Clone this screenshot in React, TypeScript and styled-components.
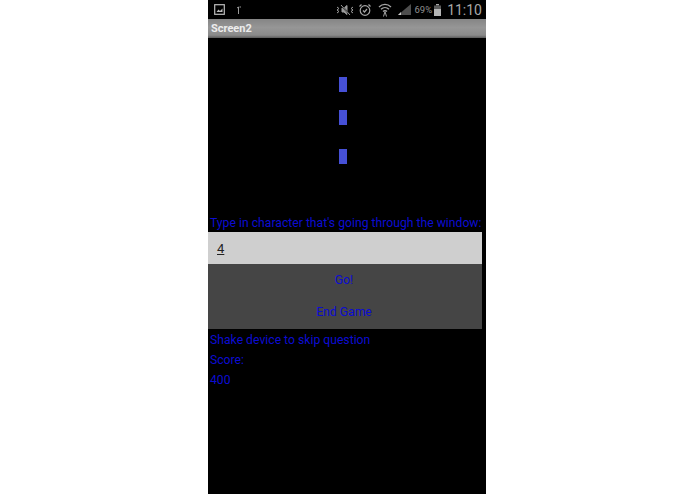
import React from "react";
import styled, { createGlobalStyle } from "styled-components";

const Global = createGlobalStyle`
  html, body { margin: 0; padding: 0; background: #fff; }
  body { width: 695px; height: 494px; overflow: hidden; font-family: Roboto, "Liberation Sans", sans-serif; }
`;
const Page = styled.div`
  width: 695px; height: 494px; display: flex; justify-content: flex-start; background: #fff;
  padding-left: 208px; box-sizing: border-box;
`;
const Phone = styled.div`
  width: 278px; height: 494px; background: #000; display: flex; flex-direction: column;
`;
const StatusBar = styled.div`
  height: 19px; display: flex; align-items: center; padding: 0 4px 0 6px; color: #9a9a9a; flex: none;
`;
const StatusLeft = styled.div`
  display: flex; align-items: center; gap: 11px; flex: 1;
`;
const StatusRight = styled.div`
  display: flex; align-items: center;
`;
const Percent = styled.span`
  font-size: 9.5px; color: #8f8f8f; margin-left: 2px; margin-right: 2px;
`;
const Clock = styled.span`
  font-size: 14px; color: #a8a8a8; margin-left: 6px;
`;
const TitleBar = styled.div`
  height: 19px; flex: none; display: flex; align-items: center; padding-left: 3px;
  background: linear-gradient(#858585, #969696 45%, #8a8a8a 85%, #5a5a5a);
  color: #ececec; font-size: 11px; font-weight: 700;
`;
const Canvas = styled.div`
  height: 174px; flex: none; display: flex; flex-direction: column; align-items: flex-start;
  padding: 39px 0 0 131px; box-sizing: border-box;
`;
const Bar = styled.div<{ $h: number; $mb: number }>`
  width: 8px; height: ${(p) => p.$h}px; margin-bottom: ${(p) => p.$mb}px; background: #4650d6; flex: none;
`;
const Label = styled.div`
  color: #0c0cd2; font-size: 12.2px; line-height: 20px; padding-left: 2px; white-space: nowrap;
`;
const Prompt = styled(Label)`
  line-height: 18px; padding-top: 2px;
`;
const Form = styled.div`
  width: 274px; display: flex; flex-direction: column; flex: none;
`;
const Field = styled.div`
  height: 32px; background: #cfcfcf; display: flex; align-items: center; padding-left: 9px;
  font-size: 13px; color: #222; box-sizing: border-box;
`;
const Digit = styled.span`
  text-decoration: underline;
`;
const Buttons = styled.div`
  background: #454545; display: flex; flex-direction: column; padding: 0 2px 1px 0;
`;
const GameButton = styled.div`
  height: 32px; display: flex; align-items: center; justify-content: center;
  color: #0c0cd2; font-size: 12.2px;
`;
const Footer = styled.div`
  display: flex; flex-direction: column; padding-top: 1px;
`;

export default function App() {
  return (
    <>
      <Global />
      <Page>
        <Phone>
          <StatusBar>
            <StatusLeft>
              <svg width="11" height="11" viewBox="0 0 11 11" fill="none">
                <rect x="0.7" y="0.7" width="9.6" height="9.6" stroke="#bdbdbd" strokeWidth="1.2" />
                <path d="M2.5 8 L4.5 5.5 L6 7 L8.5 4.5 V8 Z" fill="#bdbdbd" />
              </svg>
              <svg width="5" height="8" viewBox="0 0 5 8" fill="none">
                <path d="M1 2 L2.5 1 V8 M3.5 1 H5" stroke="#999" strokeWidth="1" />
              </svg>
            </StatusLeft>
            <StatusRight>
              <svg width="18" height="12" viewBox="0 0 18 12" fill="none" stroke="#9c9c9c" strokeWidth="1">
                <path d="M6 4 H8 L11 1.5 V10.5 L8 8 H6 Z" fill="#9c9c9c" />
                <path d="M1 3 L3 4.5 L1 6 L3 7.5 L1 9 M17 3 L15 4.5 L17 6 L15 7.5 L17 9" />
                <path d="M5 1 L14 11" stroke="#000" strokeWidth="1.6" />
                <path d="M5 1 L14 11" />
              </svg>
              <svg width="14" height="14" viewBox="0 0 14 14" fill="none" stroke="#a5a5a5" strokeWidth="1.2" style={{ marginLeft: 4 }}>
                <circle cx="7" cy="7.5" r="4.8" />
                <path d="M5 7.5 L6.5 9 L9 6 M1.5 3.5 L3.5 1.5 M12.5 3.5 L10.5 1.5" />
              </svg>
              <svg width="14" height="15" viewBox="0 0 14 15" fill="none" stroke="#a5a5a5" strokeWidth="1.3" style={{ marginLeft: 6 }}>
                <path d="M1 5 C4.5 1.5 9.5 1.5 13 5 M3 7.3 C5.3 5 8.7 5 11 7.3 M5 9.5 C6.2 8.4 7.8 8.4 9 9.5" />
                <path d="M7 9.5 L5.5 14.5 M7 9.5 L8.5 14.5" strokeWidth="1" />
              </svg>
              <svg width="15" height="13" viewBox="0 0 15 13" style={{ marginLeft: 5 }}>
                <path d="M14 1 V12 H1 Z" fill="#4e4e4e" />
                <path d="M1 12 L4 9 V12 Z" fill="#ccc" />
              </svg>
              <Percent>69%</Percent>
              <svg width="7" height="12" viewBox="0 0 7 12">
                <rect x="2" y="0" width="3" height="1.5" fill="#aaa" />
                <rect x="0" y="1.5" width="7" height="3.5" fill="#5c5c5c" />
                <rect x="0" y="5" width="7" height="7" fill="#b5b5b5" />
              </svg>
              <Clock>11:10</Clock>
            </StatusRight>
          </StatusBar>
          <TitleBar>Screen2</TitleBar>
          <Canvas>
            <Bar $h={15} $mb={18} />
            <Bar $h={15} $mb={24} />
            <Bar $h={15} $mb={0} />
          </Canvas>
          <Prompt>Type in character that's going through the window:</Prompt>
          <Form>
            <Field><Digit>4</Digit></Field>
            <Buttons>
              <GameButton>Go!</GameButton>
              <GameButton>End Game</GameButton>
            </Buttons>
          </Form>
          <Footer>
            <Label>Shake device to skip question</Label>
            <Label>Score:</Label>
            <Label>400</Label>
          </Footer>
        </Phone>
      </Page>
    </>
  );
}
